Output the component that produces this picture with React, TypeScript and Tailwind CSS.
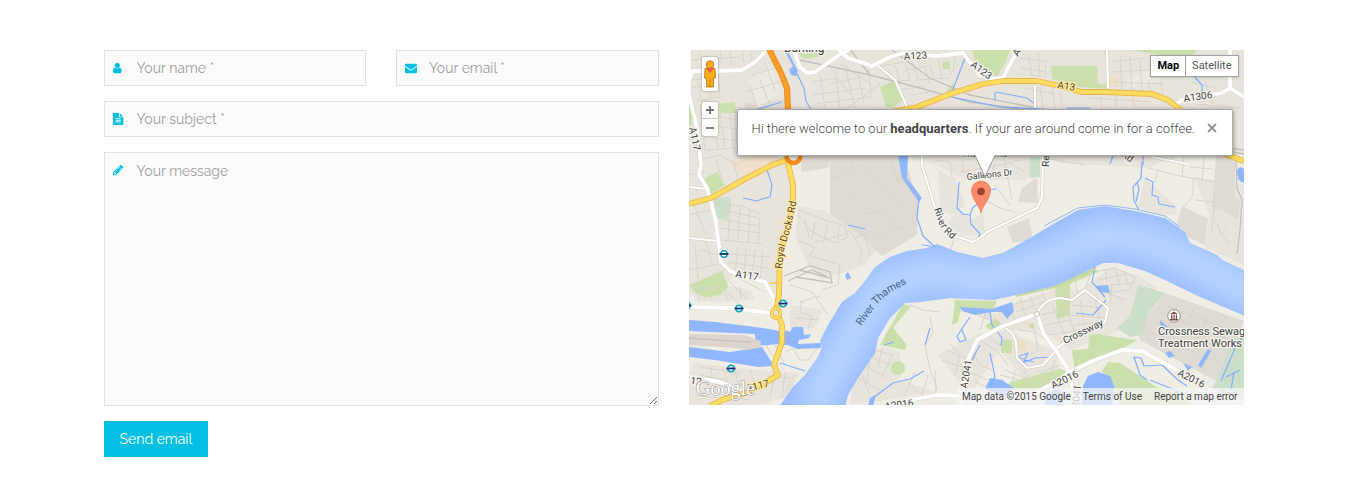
import type { ReactNode } from "react";

const ICONS = {
  user: {
    box: "0 0 1280 1792",
    d: "M1280 1399q0 109-62.5 187t-150.5 78h-854q-88 0-150.5-78t-62.5-187q0-85 8.5-160.5t31.5-152 58.5-131 94-89 134.5-34.5q131 128 313 128t313-128q76 0 134.5 34.5t94 89 58.5 131 31.5 152 8.5 160.5zm-256-887q0 159-112.5 271.5t-271.5 112.5-271.5-112.5-112.5-271.5 112.5-271.5 271.5-112.5 271.5 112.5 112.5 271.5z",
  },
  envelope: {
    box: "0 0 1792 1792",
    d: "M1792 710v794q0 66-47 113t-113 47h-1472q-66 0-113-47t-47-113v-794q44 49 101 87 362 246 497 345 57 42 92.5 65.5t94.5 48 110 24.5h2q51 0 110-24.5t94.5-48 92.5-65.5q170-123 498-345 57-39 100-87zm0-294q0 79-49 151t-122 123q-376 261-468 325-10 7-42.5 31t-54 38.8-52 32.2-57.5 27-50 9h-2q-23 0-50-9t-57.5-27-52-32.2-54-38.8-42.5-31q-91-64-262-182.5t-205-142.5q-62-42-117-115.5t-55-136.5q0-78 41.5-130t118.5-52h1472q65 0 112.5 47t47.5 113z",
  },
  file: {
    box: "128 0 1536 1792",
    d: "M1596 476q14 14 28 36h-472v-472q22 14 36 28zm-476 164h544v1056q0 40-28 68t-68 28h-1344q-40 0-68-28t-28-68v-1600q0-40 28-68t68-28h800v544q0 40 28 68t68 28zm160 736v-64q0-14-9-23t-23-9h-704q-14 0-23 9t-9 23v64q0 14 9 23t23 9h704q14 0 23-9t9-23zm0-256v-64q0-14-9-23t-23-9h-704q-14 0-23 9t-9 23v64q0 14 9 23t23 9h704q14 0 23-9t9-23zm0-256v-64q0-14-9-23t-23-9h-704q-14 0-23 9t-9 23v64q0 14 9 23t23 9h704q14 0 23-9t9-23z",
  },
  pencil: {
    box: "128 0 1536 1792",
    d: "M491 1536l91-91-235-235-91 91v107h128v128h107zm523-928q0-22-22-22-10 0-17 7l-542 542q-7 7-7 17 0 22 22 22 10 0 17-7l542-542q7-7 7-17zm-54-192l416 416-832 832h-416v-416zm683 96q0 53-37 90l-166 166-416-416 166-165q36-38 90-38 53 0 91 38l235 234q37 39 37 91z",
  },
};

const FIELD =
  "block w-full rounded-none border border-[#e1e1e1] bg-[#fbfbfb] pl-8 pr-3 font-['Raleway','Lato',sans-serif] text-[14px] leading-6 text-[#555] placeholder:text-[#9e9e9e] focus:border-[#03c0e3] focus:outline-none";

function Field({ id, label, icon, children }: { id: string; label: string; icon: keyof typeof ICONS; children: ReactNode }) {
  return (
    <div className="relative">
      <label htmlFor={id} aria-label={label} className="pointer-events-none absolute left-[9px] top-3">
        <svg viewBox={ICONS[icon].box} preserveAspectRatio="xMinYMid meet" className="h-3 w-3 fill-[#03c0e3]" aria-hidden="true">
          <path fillRule="evenodd" d={ICONS[icon].d} />
        </svg>
      </label>
      {children}
    </div>
  );
}

const PARKS = [
  "M718 104L735 102L736 113L720 113Z",
  "M689 100L692 103L692 124L689 126Z",
  "M799 50L825 50L818 57L806 59L800 56Z",
  "M972 50L1010 50L1005 64L997 76L985 70L975 60Z",
  "M880 87L894 81L903 99L893 108L886 107Z",
  "M942 62L950 61L950 69L943 69Z",
  "M946 91L954 82L951 92Z",
  "M1051 66L1097 66L1098 84L1107 84L1106 89L1080 87L1052 79Z",
  "M1128 50L1196 50L1190 60L1175 58L1150 53Z",
  "M705 178L717 172L725 185L710 195Z",
  "M689 285L722 271L728 287L720 295L705 297L694 292Z",
  "M903 304L911 306L893 328L907 345L905 350L880 345Z",
  "M955 300L997 301L993 310L961 309L958 322L952 325Z",
  "M1010 382L1060 369L1068 372L1040 390L1008 390Z",
  "M1072 350L1088 349L1090 335L1099 334L1115 337L1137 340L1122 349L1075 373Z",
  "M1108 362L1120 363L1158 388L1182 392L1190 405L1120 405L1115 388L1102 371Z",
  "M1055 286L1090 270L1094 266L1098 272L1070 284L1070 315L1057 319Z",
  "M1002 340L1012 340L1012 353L1001 353Z",
  "M995 318L1003 325L990 330L985 326Z",
  "M1029 324L1034 323L1034 328L1029 328Z",
];
const WOODS = [
  "M713 198L731 197L731 212L726 220L717 218Z",
  "M1138 285L1165 293L1148 313L1142 335L1130 337L1117 328L1130 316Z",
  "M1230 342L1244 335L1244 400L1212 388L1220 375Z",
  "M1030 157L1040 157L1040 177L1029 178Z",
];
const BLOCKS = [
  "M689 50H1244V155L1180 155L1148 168L1060 163L1050 157L1035 165L1026 180L963 179L935 165L900 155L789 155L793 190L784 240L779 300L765 282L735 275L722 290L689 295Z",
  "M798 206L822 210L850 227L860 228L876 250L865 265L842 273L820 280L805 260L795 235Z",
  "M958 210L973 220L984 212L985 235L955 236L945 226Z",
  "M938 170L955 178L965 205L952 215L940 210Z",
  "M1145 178L1175 205L1177 215L1160 214L1138 207Z",
  "M1193 177L1244 185V265L1222 255L1205 248L1210 215Z",
  "M695 286L725 285L750 290L755 300L720 302L695 301Z",
  "M790 305L822 310L815 328L790 330Z",
  "M694 363L760 370L800 373L787 397L760 405H689V375Z",
  "M852 362L870 352L883 347L900 352L900 380L935 392L880 401L851 404Z",
  "M938 355L968 340L978 334L1005 330L1057 352L1060 380L1030 387L1000 350L975 388L966 391Z",
  "M970 310L998 314L1005 306L1055 289L1080 290L1110 268L1137 275L1158 288L1120 330L1070 350L1040 330L1010 330Z",
];
const SITES = [
  "M830 155L903 155L918 200L917 235L882 256L855 231L830 214Z",
  "M1183 207L1208 218L1205 245L1188 237L1177 222Z",
  "M1216 155L1235 155L1235 198L1240 200L1238 220L1222 210L1212 208Z",
  "M1022 188L1037 178L1038 203L1018 202Z",
  "M1007 227L1029 218L1033 240L1013 243Z",
  "M1165 293L1244 321L1232 355L1218 382L1140 340L1138 330Z",
  "M745 103L788 99L785 115L745 118Z",
  "M800 156L832 150L828 168L802 172Z",
];
const WATER = [
  "M689 320L715 322L763 328L780 331L780 344L756 346L755 334L689 331Z",
  "M689 347L730 352L762 347L774 366L758 367L715 360L689 357Z",
  "M783 337L786 330L790 332L793 327L803 327L804 335L811 334L809 338L799 340L798 344L821 343L821 348L797 349L788 345L783 345Z",
  "M898 155L908 155L907 178L922 198L919 202L902 178Z",
  "M784 50L787 50L798 71L796 76L791 75L789 70L793 66Z",
  "M960 307L992 309L1012 302L1014 311L1007 319L1002 312L992 312L975 315L962 311Z",
  "M1082 405L1083 386L1088 376L1098 372L1110 376L1115 388L1112 405Z",
  "M990 378L1002 380L1014 388L1005 396L985 389Z",
  "M870 398L876 395L873 405H868Z",
  "M848 272L851 278L847 280L845 275Z",
  "M1237 170Q1240 165 1244 169V182Q1237 184 1237 170Z",
  "M1160 320L1168 327L1161 328Z",
  "M1165 353L1170 351L1175 356L1169 358Z",
  "M1183 363L1192 367L1188 371Z",
  "M1198 365L1208 349L1211 351L1201 368Z",
  "M1096 286L1108 285L1110 293L1100 292Z",
  "M1045 394L1060 388L1064 405H1045Z",
];
const STREAMS = [
  "M797 74L804 88L806 101L813 113",
  "M755 110L782 102",
  "M965 58L953 89L947 97L917 109",
  "M952 97L1000 107L1060 110M995 92L995 101M996 92L1027 98L1036 105",
  "M1193 75L1202 85V95M1066 108H1090",
  "M767 170L772 185L770 197L762 199L757 201L743 198",
  "M919 199L917 218L923 236L935 247M922 245L931 246",
  "M959 182L957 208L963 214L970 215L971 224L980 234L978 239M970 215L973 207L983 201L984 190L996 189",
  "M1142 162L1141 178L1133 187L1134 201L1139 210M1137 182L1139 189L1136 202",
  "M1145 178L1153 182L1152 195L1158 197L1159 204L1175 207",
  "M1143 153L1143 165M1114 153L1110 164",
  "M970 317L957 336L960 342L966 340L962 330",
  "M990 312L992 325L1002 338L1001 346M980 345L972 360M990 353L995 377L990 386",
  "M873 398L893 383L910 379L924 371",
  "M1017 357L1028 353L1023 363L1035 358L1050 357L1060 347M1016 357L1034 362",
  "M1133 357L1141 358L1144 366L1162 365L1178 380L1187 386M1134 357L1140 375L1147 380",
  "M1106 300L1093 315L1076 313M1095 267L1092 282L1105 297",
  "M1244 335L1236 346L1221 381M1240 370L1226 377M1231 390L1234 372",
  "M1088 395L1100 390M1150 380L1180 392",
  "M780 363L805 371M925 345L930 328",
  "M848 225L865 229M884 345L894 342",
];
const LANES = [
  "M692 80L718 76L720 97L697 101M697 77L702 103M706 75L711 98M689 88L718 84M710 55L713 70M720 50L722 65M730 50L732 66M700 52L704 68M689 60L740 57M742 50L744 62M750 50L752 60M760 55L772 52",
  "M700 104L705 150M710 103L718 148M720 114L725 148M730 113L733 148M700 112L736 120M699 124L738 129M703 137L740 141M705 150L736 148M690 140L700 138M700 160L720 155L738 165M716 160L722 180M733 160L738 180",
  "M760 80L770 105M750 85L757 108M745 92L780 82M752 75L775 68M765 62L775 90",
  "M812 82L838 78L850 95M820 75L825 108M835 70L840 108M845 65L855 108M812 95L865 88M815 104L870 97M858 70L864 106M868 68L872 100M830 84L865 76M840 64L868 82M848 108L880 84",
  "M880 66L905 62L910 80L890 82M895 65L900 82M905 70L930 66L935 80M912 61L918 78M900 90L925 86M910 95L930 92M915 80L950 78M938 58L942 78M945 57L952 76M955 57L953 72M925 68L930 84",
  "M1020 58L1050 62M1020 68L1045 72M1028 55L1032 76M1038 52L1040 78M1045 60L1046 78M1015 74L1040 76M1025 88L1055 94M1040 86L1043 108M1052 89L1055 108M1060 92L1062 108",
  "M1110 62L1145 58M1112 72L1148 70M1120 55L1122 90M1130 56L1132 90M1140 60L1142 92M1114 82L1165 84M1148 80L1150 94M1160 80L1163 95M1190 82L1215 88M1205 78L1208 92M1240 60L1232 66M1090 98L1150 102M1100 97L1102 108M1115 96L1117 108M1132 97L1135 108M1195 104L1240 108M1210 98L1214 108",
  "M725 204L742 206L760 214M722 210L760 218L758 243M720 228L760 233M730 205L728 240M740 206L738 240M750 210L748 243M725 220L758 226M722 240L762 244M730 254L770 257M728 262L768 268M738 246L735 272M746 248L744 273M755 250L752 275M763 252L760 278M742 280L765 292M730 282L748 300M725 290L740 305M693 202L706 235M689 215L710 210M692 185L700 195M689 175L704 172M705 240L712 262M695 245L698 280M689 270L718 264M700 250L718 255",
  "M798 210L825 220L845 226L848 237L835 243L812 232L798 216M805 218L809 238M815 222L812 240M828 224L823 244M839 228L838 240M814 242L846 234M808 255L840 265L838 285L822 290M798 240L815 248L808 258M796 275L810 263M849 230L862 250L860 262M865 235L870 256M853 238L868 233M790 285L812 292L828 315",
  "M830 180L860 165L885 190L905 210M850 155L855 172L843 182M860 215L885 210L900 232M890 160L898 182M835 205L860 190M870 240L905 226",
  "M935 160L950 162L952 178M960 172L1000 165L1020 160M1003 155L1012 200M995 185L1010 205M985 200L1000 208L1015 212M1045 158L1085 165M963 160L963 172L990 174M995 162L990 180M1008 162L1025 172M955 236L950 252",
  "M1193 178L1193 195L1180 212M1195 200L1213 202M1205 150L1202 182M1148 168L1180 176L1215 182M1158 169L1155 182M1184 157L1182 176M1215 220L1222 235L1230 245M1215 240L1228 227M1215 190L1212 232M1190 167L1212 169",
  "M696 290L722 287M700 286L699 300M710 286L712 300M722 287L728 300M740 287L741 300M700 367L740 373M700 375L725 380M710 366L713 380M722 368L728 382M735 370L738 383M750 369L755 385M768 376L790 378M775 373L770 396M785 373L782 398M795 374L786 392M720 392L748 400M695 395L735 400",
  "M802 300L800 312L812 316L808 330M795 318L820 320M785 352L793 348L800 360L808 360L818 348M775 345L785 365M763 340L775 360L784 370M800 302L820 296",
  "M875 350L893 355M872 358L890 365M865 365L887 378M858 378L880 390M882 348L878 368M893 354L883 376M870 355L867 382M860 370L870 395M905 378L918 392M915 372L905 395M928 375L922 395M935 370L936 392M930 317L933 333L925 345L930 370L937 388L934 395M910 305L922 310L940 312",
  "M945 350L967 358M950 344L960 355L955 375M942 360L965 368M972 352L980 365L992 370M968 372L988 380M975 382L990 388M980 340L998 352L1008 365M990 337L1000 345M1000 375L1020 380M1005 370L1030 380M1015 370L1012 385M1025 370L1028 384M1040 370L1042 382M1055 360L1050 378M1060 365L1042 372",
  "M978 315L1000 325M985 314L980 330M1010 308L1015 320M1020 298L1026 318M1030 296L1035 310M1042 292L1047 305M1012 305L1040 297M1016 312L1050 300M1052 305L1065 335M1042 315L1062 310M1045 325L1070 320M1048 335L1073 331M1065 300L1075 335M1080 300L1085 330M1095 300L1100 320M1072 305L1102 308M1070 315L1105 318M1075 325L1100 322M1018 330L1035 332L1038 350L1030 355M1025 322L1045 340",
  "M1093 272L1115 268L1135 277M1098 280L1125 274M1105 270L1107 282M1115 268L1120 285M1125 271L1128 285M1135 277L1130 290M1110 285L1135 283M1112 292L1130 290M1100 290L1125 300M1112 285L1110 305M1090 275L1085 290M1075 280L1078 295M1062 288L1070 298",
  "M1165 305L1235 332M1160 312L1225 338M1155 322L1226 350M1147 330L1222 365M1180 300L1158 348M1195 306L1175 357M1210 311L1190 365M1225 316L1202 373M1157 300L1140 330L1155 345",
];
const STREETS = [
  "M689 80L693 71L718 71L742 70L755 62L768 49",
  "M793 49L800 67L807 73L815 72L822 67L842 53L848 58L870 65M838 49L842 53L850 49",
  "M689 50V95L697 128L701 165L699 175L707 188L711 202L715 218L718 238L721 262L730 271L745 277L765 282L773 297L775 308",
  "M870 67L890 57L903 53L937 56L963 53L968 60L980 75L992 79L1003 78L1008 68L1018 50",
  "M1172 108L1182 100L1222 93L1230 88V50M1230 88L1244 97",
  "M689 307L732 308L770 313",
  "M962 405L967 362L977 340L1003 326L1037 314M1037 314L1044 335L1057 352L1067 368L1073 388L1075 405",
  "M885 406L915 399L937 395L965 396L1003 402L1037 392L1060 380L1068 373L1095 360L1122 350L1142 351L1160 361L1182 373L1205 388L1244 403",
  "M689 377L720 382L735 388L750 393",
];
const MINOR = [
  "M922 155L922 165L935 208L942 227L955 236L973 242L980 238L987 232L1037 208L1042 198L1043 155",
  "M877 65L895 80L907 107M1107 50L1108 88M1035 86V108",
  "M1003 326L1012 333L1016 342L1017 358L1027 368L1043 365L1060 346",
  "M1037 314Q1043 299 1060 298L1072 300L1085 290L1108 308L1105 322L1075 338L1055 348",
  "M689 187L706 189M689 238L718 241M926 157L918 150M1152 157L1188 164",
];
const RAILS = [
  "M800 60L870 75L920 88L970 102L1020 109L1060 110",
  "M892 50L930 78L970 95L1037 108",
  "M850 49L870 75",
  "M784 276L810 266L830 272L832 283L815 280L795 277M788 281L812 270L826 276M800 270L830 278",
  "M1236 160L1237 188L1242 200L1240 230L1237 254",
  "M1222 147L1244 150M1222 150L1244 154",
];
const MOTORWAYS = [
  "M689 204L711 198L745 179L772 165L795 157",
  "M885 113L917 107L953 93L983 84L1003 81L1037 81L1060 86L1082 92L1105 92L1152 94L1168 100L1183 112L1205 140L1222 153L1244 161",
  "M788 163L793 185L793 205L788 228L780 252L779 295L776 310L782 325L782 342L774 365L778 375L765 383L745 393L722 400L710 406",
];
const RIVER =
  "M1055 223L1078 210L1105 206L1135 211L1165 218L1185 232L1190 243L1217 255L1222 260L1250 273V318L1198 296L1165 280L1145 271L1118 263L1103 263L1075 277L1055 286L1030 292L993 300L950 298L920 302L905 303L890 318L878 338L875 353L858 378L848 395L845 407H779L792 388L805 375L818 357L822 347L820 341L828 325L842 302L855 293L862 285L875 267L890 257L907 251L927 248L937 244L957 252L983 258L1003 253L1030 238Z";

function Label({ x, y, r = 0, size = 10, children }: { x: number; y: number; r?: number; size?: number; children: ReactNode }) {
  return (
    <text x={x} y={y} fontSize={size} transform={`rotate(${r} ${x} ${y})`}>
      {children}
    </text>
  );
}

function MapArt() {
  return (
    <svg viewBox="689 50 555 355" preserveAspectRatio="xMidYMid slice" className="block h-full w-full font-['Roboto',sans-serif]" role="img" aria-label="Map of the River Thames near Royal Docks Road">
      <defs>
        <clipPath id="river"><path d={RIVER} /></clipPath>
        <filter id="soft" x="-20%" y="-20%" width="140%" height="140%"><feGaussianBlur stdDeviation="10" /></filter>
        <path id="docks" d="M782 269L784 250L791 227L797 200" />
        <path id="thames" d="M861 326L878 303L890 292L912 281" />
        <path id="riverrd" d="M934 209L939 224L945 233L960 246" />
      </defs>
      <path d="M689 50H1244V405H689Z" fill="#f0ede5" />
      <g fill="#e8e4dc">{BLOCKS.map((d) => <path key={d} d={d} />)}</g>
      <g fill="#dfdad3">{SITES.map((d) => <path key={d} d={d} />)}</g>
      <path d="M732 163L765 154L780 158L745 177Z" fill="#f0dfca" />
      <path d="M748 82L770 67L782 93L757 108ZM1125 80L1155 68L1160 80L1132 88Z" fill="#ece9e2" />
      <path d="M1108 77H1118V86H1108ZM1018 338L1027 343L1025 352L1017 350Z" fill="#eddfc3" />
      <g fill="#cadfaa">{PARKS.map((d) => <path key={d} d={d} />)}<circle cx="898" cy="368" r="7" /></g>
      <g fill="#cadec9">{WOODS.map((d) => <path key={d} d={d} />)}</g>
      <g fill="none" stroke="#d9d4ca" strokeWidth="1" strokeLinejoin="round">{LANES.map((d) => <path key={d} d={d} />)}</g>
      <g fill="none" stroke="#c2bfba" strokeWidth="1.3">{RAILS.map((d) => <path key={d} d={d} />)}</g>
      <path d={RIVER} fill="#99bcff" />
      <g clipPath="url(#river)">
        <path d="M810 410L850 340L885 285L930 272L985 280L1045 260L1105 234L1150 242L1195 264L1260 298" fill="none" stroke="#b5d3ff" strokeWidth="36" filter="url(#soft)" />
      </g>
      <g fill="#8fb6ff">{WATER.map((d) => <path key={d} d={d} />)}</g>
      <path d="M689 334L745 335L761 341L760 347L748 350L735 348L689 345Z" fill="#ddd5cd" />
      <path d="M689 338L732 341L751 342" fill="none" stroke="#c9c0b8" strokeWidth="1.5" />
      <g fill="none" stroke="#80adff" strokeWidth="1.2" strokeLinejoin="round">{STREAMS.map((d) => <path key={d} d={d} />)}</g>
      <path d="M1044 226L1059 218L1078 208L1105 205L1135 209L1165 216L1180 227" fill="none" stroke="#92b7f3" strokeWidth="1" />
      <path d="M1016 296L1055 287L1095 269" fill="none" stroke="#c5d9a1" strokeWidth="2" />
      <g fill="none" stroke="#cfc8bc" strokeWidth="3.2" strokeLinejoin="round">{MINOR.map((d) => <path key={d} d={d} />)}</g>
      <g fill="none" stroke="#fff" strokeWidth="2.2" strokeLinejoin="round">{MINOR.map((d) => <path key={d} d={d} />)}</g>
      <g fill="none" stroke="#dcd7ce" strokeWidth="4.6" strokeLinejoin="round">{STREETS.map((d) => <path key={d} d={d} />)}</g>
      <g fill="none" stroke="#fff" strokeWidth="3.8" strokeLinejoin="round">{STREETS.map((d) => <path key={d} d={d} />)}</g>
      <g fill="none" stroke="#e5b54e" strokeWidth="5.8" strokeLinejoin="round">{MOTORWAYS.map((d) => <path key={d} d={d} />)}</g>
      <g fill="none" stroke="#ffdb60" strokeWidth="4.2" strokeLinejoin="round">{MOTORWAYS.map((d) => <path key={d} d={d} />)}</g>
      <path d="M770 283H780" stroke="#f7cd66" strokeWidth="2" />
      <path d="M769 49L781 73L787 88L788 110L791 150" fill="none" stroke="#e5831b" strokeWidth="6" />
      <path d="M769 49L781 73L787 88L788 110L791 150" fill="none" stroke="#fd9e28" strokeWidth="4.6" />
      <circle cx="793.5" cy="156" r="7" fill="#f0ede5" stroke="#f08d1e" strokeWidth="4.6" />
      <ellipse cx="776" cy="313" rx="4" ry="5" fill="#e8e4dc" stroke="#e5b54e" strokeWidth="4" />
      <ellipse cx="776" cy="313" rx="4" ry="5" fill="none" stroke="#ffdb60" strokeWidth="2.6" />
      <circle cx="1037" cy="314" r="2.5" fill="#fff" stroke="#c8c0b5" />
      {[[724, 254], [739, 308.5], [783, 303.5], [731, 368.5], [687, 305.5]].map(([x, y]) => (
        <g key={`${x}-${y}`}>
          <circle cx={x} cy={y} r="3.2" fill="#e9fbff" stroke="#18a5b3" strokeWidth="1.4" />
          <path d={`M${x - 4.5} ${y}h9`} stroke="#152c7c" strokeWidth="1.8" />
        </g>
      ))}
      <circle cx="1174" cy="316" r="6.3" fill="#fff" stroke="#9b8e85" strokeWidth="1" />
      <path d="M1170 314L1174 311.500L1178 314ZM1170 319H1178V320.500H1170ZM1171 314.500H1172.300V319H1171ZM1173.400 314.500H1174.700V319H1173.400ZM1175.800 314.500H1177V319H1175.800Z" fill="#805447" />
      <g fill="#444" stroke="#f7f5f0" strokeWidth="2.5" strokeLinejoin="round" paintOrder="stroke">
        <Label x={784} y={52} size={12}>Barking</Label>
        <Label x={904} y={60} r={-4}>A123</Label>
        <Label x={970} y={66} r={36}>A123</Label>
        <Label x={1018} y={57} r={-60}>A123</Label>
        <Label x={1184} y={102} r={-8}>A1306</Label>
        <Label x={689} y={128} r={78}>A117</Label>
        <Label x={735} y={277} r={8}>A117</Label>
        <Label x={678} y={382} r={8}>A112</Label>
        <Label x={962} y={157} size={9}>Thames Rd</Label>
        <Label x={967} y={180} r={-6} size={9}>Galleons Dr</Label>
        <Label x={1049} y={167} r={-88} size={10}>Renwick</Label>
        <Label x={1121} y={156} r={35}>Rd</Label>
        <Label x={1065} y={344} r={-26}>Crossway</Label>
        <Label x={967} y={389} r={-80}>A2041</Label>
        <Label x={1053} y={389} r={-26}>A2016</Label>
        <Label x={1177} y={375} r={27}>A2016</Label>
        <Label x={1078} y={414} r={-84}>A2041</Label>
        <Label x={885} y={410} r={-8}>A2016</Label>
        <Label x={1158} y={335} size={11}>Crossness Sewage</Label>
        <Label x={1158} y={347} size={11}>Treatment Works</Label>
        <text fontSize="10"><textPath href="#riverrd">River Rd</textPath></text>
      </g>
      <g fill="#5a4326" stroke="#ffeaa3" strokeWidth="2.5" strokeLinejoin="round" paintOrder="stroke">
        <Label x={1057} y={88} r={9}>A13</Label>
        <Label x={747} y={392} r={-14}>A117</Label>
        <text fontSize="10"><textPath href="#docks">Royal Docks Rd</textPath></text>
      </g>
      <text fontSize="10.500" fill="#46618f"><textPath href="#thames">River Thames</textPath></text>
      <text x="696" y="395" className="font-['Liberation_Serif',serif]" fontSize="20" fill="#fff" stroke="#a0a0a0" strokeWidth="1.2" paintOrder="stroke">Google</text>
      <path d="M981 213C980 206 971.500 199 971.500 190.500A9.500 9.500 0 0 1 990.500 190.500C990.500 199 982 206 981 213Z" fill="#fe8c6c" stroke="#e57958" strokeWidth=".7" />
      <circle cx="981" cy="191.500" r="3.800" fill="#9c4331" />
    </svg>
  );
}

function ContactMap() {
  return (
    <section aria-label="Map" className="relative h-[355px] overflow-hidden font-['Roboto',sans-serif]">
      <MapArt />
      <div className="absolute left-[13px] top-[7px] flex flex-col gap-[11px]">
        <button type="button" aria-label="Street View" className="flex h-[34px] w-4 items-center justify-center rounded-[2px] bg-white shadow-[0_0_2px_#777]">
          <svg viewBox="0 0 14 30" className="h-[30px] w-[14px]" aria-hidden="true">
            <g fill="#f8ae15" stroke="#bb7112" strokeWidth=".8">
              <path d="M2 9.500Q7 7 12 9.500L12.500 19H10.500V28H3.500V19H1.500Z" />
              <circle cx="7" cy="5.500" r="3.800" />
            </g>
            <path d="M3 9L7 14L11 9Z" fill="#e95a4d" />
            <path d="M7 19V28" stroke="#c77c16" />
          </svg>
        </button>
        <div className="flex flex-col divide-y divide-[#ccc] rounded-[2px] bg-white shadow-[0_0_2px_#777]">
          <button type="button" aria-label="Zoom in" className="flex h-[17px] w-4 items-center justify-center">
            <svg viewBox="0 0 8 8" className="h-2 w-2" aria-hidden="true"><path d="M0 4H8M4 0V8" stroke="#747474" strokeWidth="1.800" /></svg>
          </button>
          <button type="button" aria-label="Zoom out" className="flex h-[17px] w-4 items-center justify-center">
            <svg viewBox="0 0 8 8" className="h-2 w-2" aria-hidden="true"><path d="M0 4H8" stroke="#747474" strokeWidth="1.800" /></svg>
          </button>
        </div>
      </div>
      <div className="absolute right-[5px] top-[5px] flex h-[22px] divide-x divide-[#a0a0a0] border border-[#a0a0a0] bg-white text-[11px] leading-5 shadow-sm">
        <button type="button" className="px-[6px] font-bold text-black">Map</button>
        <button type="button" className="px-[6px] text-[#565656]">Satellite</button>
      </div>
      <div className="absolute left-12 right-[11px] top-[59px] flex h-[47px] items-start rounded-[2px] border border-[#aaa] bg-white pl-[14px] pr-[15px] pt-[9px] shadow-[0_1px_5px_rgba(0,0,0,0.45)]">
        <p className="grow whitespace-nowrap text-[13px] font-light leading-5 text-[#444]">
          Hi there welcome to our <strong className="font-bold">headquarters</strong>. If your are around come in for a coffee.
        </p>
        <button type="button" aria-label="Close" className="flex h-[17px] items-center">
          <svg viewBox="0 0 10 10" className="h-[10px] w-[10px]" aria-hidden="true"><path d="M1 1L9 9M9 1L1 9" stroke="#929292" strokeWidth="1.800" /></svg>
        </button>
        <svg viewBox="0 0 22 24" className="absolute left-[236px] top-11 h-6 w-[22px] overflow-visible" aria-hidden="true">
          <path d="M1 1L11 23L21 1" fill="#fff" stroke="#999" strokeWidth="1" />
        </svg>
      </div>
      <footer className="absolute bottom-0 right-0 flex h-[17px] gap-3 bg-[#f5f5f5]/75 pl-[5px] pr-[6px] text-[10px] leading-[17px] text-[#444]">
        <span>Map data ©2015 Google</span>
        <a href="#terms">Terms of Use</a>
        <a href="#report">Report a map error</a>
      </footer>
    </section>
  );
}

export default function App() {
  return (
    <main className="mx-auto grid max-w-[1142px] grid-cols-1 gap-[30px] bg-white py-[50px] pr-[2px] md:grid-cols-2">
      <form className="flex flex-col items-stretch gap-[15px]" onSubmit={(e) => e.preventDefault()}>
        <div className="grid grid-cols-2 gap-[30px]">
          <Field id="name" label="Your name" icon="user">
            <input id="name" type="text" placeholder="Your name *" className={`${FIELD} h-9`} />
          </Field>
          <Field id="email" label="Your email" icon="envelope">
            <input id="email" type="email" placeholder="Your email *" className={`${FIELD} h-9`} />
          </Field>
        </div>
        <Field id="subject" label="Your subject" icon="file">
          <input id="subject" type="text" placeholder="Your subject *" className={`${FIELD} h-9`} />
        </Field>
        <Field id="message" label="Your message" icon="pencil">
          <textarea id="message" placeholder="Your message" className={`${FIELD} h-[254px] py-[6px]`} />
        </Field>
        <button type="submit" className="h-9 self-start bg-[#03c0e3] px-4 font-['Raleway','Lato',sans-serif] text-[14px] leading-5 text-white hover:bg-[#02acc9]">
          Send email
        </button>
      </form>
      <ContactMap />
    </main>
  );
}
